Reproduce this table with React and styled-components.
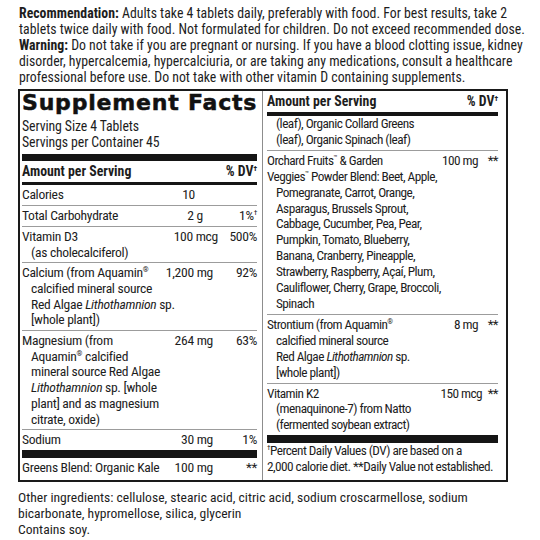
import React from "react";
import styled, { createGlobalStyle } from "styled-components";

const GlobalStyle = createGlobalStyle`
  body {
    margin: 0;
    background: #fff;
    color: #1d1d1d;
    font-family: "Roboto Condensed", Roboto, "Liberation Sans", sans-serif;
    font-stretch: condensed;
  }
`;

const Page = styled.div`
  width: 540px;
  height: 540px;
  box-sizing: border-box;
  padding: 5px 32px 0 18px;
  font-size: 13.8px;
  line-height: 16px;
  overflow: hidden;
`;

const Para = styled.p`
  margin: 0;
  padding-left: 1px;
  white-space: nowrap;
`;

const Box = styled.div`
  margin-top: 4px;
  border: 2px solid #1a1a1a;
  display: grid;
  grid-template-columns: 242px minmax(0, 1fr);
`;

const Column = styled.div`
  padding: ${(p) => (p.$right ? "0 8px 0 4px" : "0 5px 2px 2px")};
  border-left: ${(p) => (p.$right ? "1px solid #8d8d8d" : "none")};
  font-size: ${(p) => (p.$right ? 13.3 : 13.6)}px;
  letter-spacing: ${(p) => (p.$right ? -0.55 : -0.3)}px;
  line-height: ${(p) => (p.$right ? 15.9 : 15.7)}px;
  min-width: 0;
`;

const Title = styled.h1`
  margin: 0;
  font-family: "DejaVu Sans", sans-serif;
  font-stretch: normal;
  font-weight: 700;
  font-size: 22px;
  letter-spacing: 0.8px;
  -webkit-text-stroke: 0.5px #111;
  line-height: 24px;
  white-space: nowrap;
  color: #111;
`;

const Serving = styled.div`
  margin-top: 4px;
  font-size: 13.8px;
  letter-spacing: -0.1px;
`;

const Bar = styled.div`
  height: ${(p) => p.$h}px;
  margin-top: ${(p) => p.$mt || 0}px;
  background: #151515;
`;

const Head = styled.div`
  display: flex;
  justify-content: space-between;
  font-size: 13.8px;
  font-weight: 700;
  letter-spacing: 0;
  line-height: 16px;
  padding: ${(p) => p.$pad};
`;

const Row = styled.div`
  padding: ${(p) => (p.$top != null ? p.$top : 2)}px 0 2px;
  border-bottom: ${(p) => (p.$last ? "none" : "1px solid #9c9c9c")};
`;

const Line = styled.div`
  display: grid;
  grid-template-columns: 1fr auto ${(p) => p.$dv}px;
  white-space: nowrap;
`;

const Amount = styled.span`
  text-align: right;
  margin-right: ${(p) => p.$nudge || 0}px;
`;

const Dv = styled.span`
  text-align: right;
`;

const Sub = styled.div`
  padding-left: ${(p) => (p.$flush ? 0 : 9)}px;
  white-space: nowrap;
`;

const Sup = styled.sup`
  font-size: 0.55em;
  line-height: 0;
  vertical-align: 0.7em;
`;

const Note = styled.div`
  line-height: 16px;
  white-space: nowrap;
`;

const Footer = styled.p`
  margin: 7px 0 0;
  font-size: 13.6px;
  white-space: nowrap;
`;

const reg = <Sup>®</Sup>;
const tm = <Sup>™</Sup>;
const dagger = <Sup>†</Sup>;

const leftRows = [
  { name: "Calories", amount: "10", dv: "", nudge: 18 },
  { name: "Total Carbohydrate", amount: "2 g", dv: <>1%{dagger}</>, nudge: 10 },
  { name: "Vitamin D3", amount: "100 mcg", dv: "500%", nudge: -5, sub: ["(as cholecalciferol)"] },
  {
    name: <>Calcium (from Aquamin{reg}</>,
    amount: "1,200 mg",
    dv: "92%",
    sub: [
      "calcified mineral source",
      <>Red Algae <i>Lithothamnion</i> sp.</>,
      "[whole plant])",
    ],
  },
  {
    name: "Magnesium (from",
    amount: "264 mg",
    dv: "63%",
    sub: [
      <>Aquamin{reg} calcified</>,
      "mineral source Red Algae",
      <><i>Lithothamnion</i> sp. [whole</>,
      "plant] and as magnesium",
      "citrate, oxide)",
    ],
  },
  { name: "Sodium", amount: "30 mg", dv: "1%", last: true },
];

const rightRows = [
  {
    top: 0,
    sub: ["(leaf), Organic Collard Greens", "(leaf), Organic Spinach (leaf)"],
  },
  {
    name: <>Orchard Fruits{tm} &amp; Garden</>,
    amount: "100 mg",
    dv: "**",
    flush: <>Veggies{tm} Powder Blend: Beet, Apple,</>,
    sub: [
      "Pomegranate, Carrot, Orange,",
      "Asparagus, Brussels Sprout,",
      "Cabbage, Cucumber, Pea, Pear,",
      "Pumpkin, Tomato, Blueberry,",
      "Banana, Cranberry, Pineapple,",
      "Strawberry, Raspberry, Açaí, Plum,",
      "Cauliflower, Cherry, Grape, Broccoli,",
      "Spinach",
    ],
  },
  {
    name: <>Strontium (from Aquamin{reg}</>,
    amount: "8 mg",
    dv: "**",
    sub: [
      "calcified mineral source",
      <>Red Algae <i>Lithothamnion</i> sp.</>,
      "[whole plant])",
    ],
  },
  {
    name: "Vitamin K2",
    amount: "150 mcg",
    dv: "**",
    nudge: -4,
    last: true,
    sub: ["(menaquinone-7) from Natto", "(fermented soybean extract)"],
  },
];

const NutrientRow = ({ row, dvWidth }) => (
  <Row $last={row.last} $top={row.top}>
    {row.name && (
      <Line $dv={dvWidth}>
        <span>{row.name}</span>
        <Amount $nudge={row.nudge}>{row.amount}</Amount>
        <Dv>{row.dv}</Dv>
      </Line>
    )}
    {row.flush && <Sub $flush>{row.flush}</Sub>}
    {(row.sub || []).map((s, i) => (
      <Sub key={i}>{s}</Sub>
    ))}
  </Row>
);

const App = () => {
  return (
    <Page>
      <GlobalStyle />
      <Para>
        <b>Recommendation:</b> Adults take 4 tablets daily, preferably with food. For best results, take 2
        <br />
        tablets twice daily with food. Not formulated for children. Do not exceed recommended dose.
        <br />
        <b>Warning:</b> Do not take if you are pregnant or nursing. If you have a blood clotting issue, kidney
        <br />
        disorder, hypercalcemia, hypercalciuria, or are taking any medications, consult a healthcare
        <br />
        professional before use. Do not take with other vitamin D containing supplements.
      </Para>

      <Box>
        <Column>
          <Title>Supplement Facts</Title>
          <Serving>
            Serving Size 4 Tablets
            <br />
            Servings per Container 45
          </Serving>
          <Bar $h={7} $mt={4} />
          <Head $pad="2px 0 3px">
            <span>Amount per Serving</span>
            <span>% DV{dagger}</span>
          </Head>
          <Bar $h={3} />
          {leftRows.map((r, i) => (
            <NutrientRow key={i} row={r} dvWidth={44} />
          ))}
          <Bar $h={8} />
          <NutrientRow
            row={{ name: "Greens Blend: Organic Kale", amount: "100 mg", dv: "**", last: true }}
            dvWidth={44}
          />
        </Column>

        <Column $right>
          <Head $pad="2px 0 3px">
            <span>Amount per Serving</span>
            <span>% DV{dagger}</span>
          </Head>
          <Bar $h={4} />
          {rightRows.map((r, i) => (
            <NutrientRow key={i} row={r} dvWidth={20} />
          ))}
          <Bar $h={8} />
          <Note>
            {dagger}Percent Daily Values (DV) are based on a
            <br />
            2,000 calorie diet. **Daily Value not established.
          </Note>
        </Column>
      </Box>

      <Footer>
        Other ingredients: cellulose, stearic acid, citric acid, sodium croscarmellose, sodium
        <br />
        bicarbonate, hypromellose, silica, glycerin
        <br />
        Contains soy.
      </Footer>
    </Page>
  );
};

export default App;
